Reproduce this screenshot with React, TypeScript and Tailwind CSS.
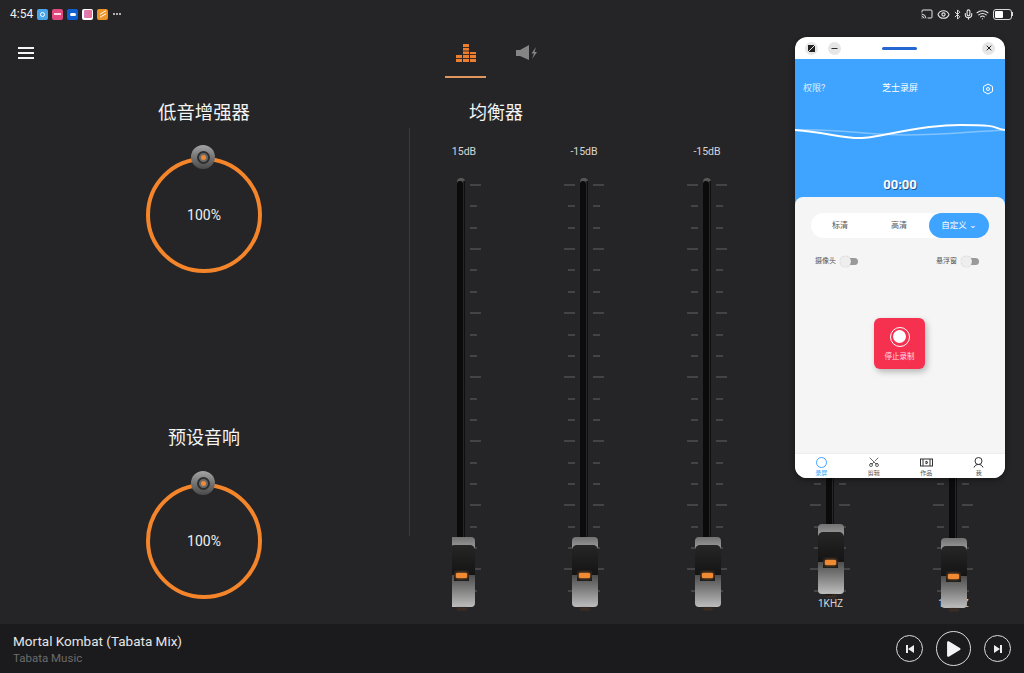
import { Bluetooth, Cast, Eye, Mic, Minus, Scissors, Wifi, X } from "lucide-react";

const cjk = "font-['Roboto','Noto_Sans_CJK_SC',sans-serif]";

function range(n: number): number[] {
  return Array.from({ length: n }, (_, i) => i);
}

function Ticks({ side }: { side: "left" | "right" }) {
  return (
    <div className={`flex w-[11px] flex-col justify-between pt-[6px] h-[414px] ${side === "left" ? "items-end" : "items-start"}`}>
      {range(20).map((i) => (
        <div key={i} className={`h-[2px] bg-[#444446] ${i % 3 === 0 ? "w-[11px]" : "w-[7px]"}`} />
      ))}
    </div>
  );
}

function Thumb({ top }: { top: string }) {
  return (
    <div className={`absolute left-[49px] ${top} h-[73px] w-[26px]`}>
      <div className="h-[12px] rounded-t-[4px] bg-gradient-to-b from-[#727272] to-[#a0a0a0]" />
      <div className="-mt-[4px] h-[30px] rounded-t-[5px] bg-gradient-to-b from-[#262626] to-[#141414]" />
      <div className="h-[32px] rounded-b-[4px] bg-gradient-to-b from-[#4e4e4e] to-[#bebebe]" />
      <div className="absolute left-[5px] top-[33px] flex h-[11px] w-[15px] items-center justify-center bg-[#1b1b1b]">
        <div className="h-[5px] w-[11px] rounded-[1px] bg-[#f08a33] shadow-[0_0_3px_#f08a33]" />
      </div>
      <div className="mx-auto mt-[1px] h-[2px] w-[10px] bg-[#4a3423] blur-[1px]" />
    </div>
  );
}

function EqColumn({ db, label, top, dbClass }: { db?: string; label?: string; top: string; dbClass?: string }) {
  return (
    <div className="relative w-[123px] shrink-0">
      <div className={`h-[14px] pr-px text-center text-[10.5px] leading-[14px] text-[#d6d6d6] ${dbClass ?? ""}`}>{db}</div>
      <div className="mt-[19px] flex h-[418px] pl-[41px]">
        <Ticks side="left" />
        <div className="ml-[5px] flex h-[418px] w-[8px] rounded-t-full bg-gradient-to-b from-[#5c5c5c] to-[#333335] to-[3%] pt-[3px]">
          <div className="h-full w-[6px] rounded-t-full bg-[#0b0b0b]" />
          <div className="h-full w-[1px] bg-[#262628]" />
          <div className="h-full w-[1px] bg-[#0f0f0f]" />
        </div>
        <div className="ml-[5px]">
          <Ticks side="right" />
        </div>
      </div>
      <div className="mt-[1px] h-[14px] text-center text-[10px] leading-[14px] text-[#d6d6d6]">{label}</div>
      <Thumb top={top} />
    </div>
  );
}

function Knob() {
  return (
    <div className="relative flex h-[116px] w-[116px] items-center justify-center rounded-full border-[4px] border-[#f5852b]">
      <span className="text-[14px] text-[#efefef]">100%</span>
      <div className="absolute -top-[16px] left-[41px] flex h-[24px] w-[24px] items-center justify-center rounded-full bg-gradient-to-b from-[#a4a4a4] to-[#4a4a4a]">
        <div className="flex h-[13px] w-[13px] items-center justify-center rounded-full border-[2px] border-[#2e2e2e] bg-[#6a6a6a]">
          <div className="h-[5px] w-[5px] rounded-full bg-[#f08a33]" />
        </div>
      </div>
    </div>
  );
}

function AppDot({ className, children }: { className: string; children?: React.ReactNode }) {
  return <div className={`flex h-[11px] w-[11px] items-center justify-center rounded-[2px] ${className}`}>{children}</div>;
}

function StatusBar() {
  return (
    <div className="flex h-[28px] items-center pl-[10px] pr-[11px]">
      <span className="w-[27px] text-[12px] text-[#f0f0f0]">4:54</span>
      <div className="flex items-center gap-[4px]">
        <AppDot className="bg-[#48a5ea]">
          <div className="h-[5px] w-[5px] rounded-full border border-white" />
        </AppDot>
        <AppDot className="bg-[#e0487f]">
          <div className="h-[2px] w-[7px] bg-white/80" />
        </AppDot>
        <AppDot className="bg-[#0f5fd0]">
          <div className="h-[3px] w-[6px] rounded-full bg-white" />
        </AppDot>
        <AppDot className="bg-white">
          <div className="h-[8px] w-[8px] rounded-[1px] bg-gradient-to-r from-[#d77fc0] to-[#f06c8c]" />
        </AppDot>
        <AppDot className="bg-[#ee9325]">
          <div className="h-[4px] w-[6px] -skew-y-[30deg] border-y border-white" />
        </AppDot>
        <div className="ml-[1px] flex gap-[1px]">
          {range(3).map((i) => (
            <div key={i} className="h-[2px] w-[2px] rounded-full bg-[#dcdcdc]" />
          ))}
        </div>
      </div>
      <div className="ml-auto flex items-center text-[#e8e8e8]">
        <Cast size={12} strokeWidth={2} />
        <Eye size={13} strokeWidth={2} className="ml-[4px]" />
        <Bluetooth size={11} strokeWidth={2} className="ml-[2px]" />
        <Mic size={11} strokeWidth={2.4} className="ml-[0px]" />
        <Wifi size={13} strokeWidth={2} className="ml-[2px]" />
        <div className="ml-[4px] flex items-center">
          <div className="flex h-[11px] w-[19px] items-center rounded-[3px] border border-[#d8d8d8] p-px">
            <div className="h-full w-[8px] rounded-[1px] bg-white" />
          </div>
          <div className="h-[4px] w-[1px] bg-[#d8d8d8]" />
        </div>
      </div>
    </div>
  );
}

function Header() {
  return (
    <div className="flex h-[51px] shrink-0">
      <div className="ml-[18px] mt-[19px] flex h-[12px] w-[16px] flex-col justify-between">
        {range(3).map((i) => (
          <div key={i} className="h-[2px] bg-[#f4f4f4]" />
        ))}
      </div>
      <div className="ml-[411px] flex h-[50px] w-[41px] items-start justify-center border-b-2 border-[#e0965c] pt-[16px]">
        <svg width="20" height="18" viewBox="0 0 20 18">
          <path d="M0 11h6v7H0zM7 0h6v18H7zM14 8h6v10h-6z" fill="#ec7f2f" />
          <path d="M0 14.5h20M7 3.5h6M7 7h6M7 10.5h13" stroke="#3a2a20" strokeWidth="1" />
        </svg>
      </div>
      <div className="ml-[30px] mt-[16px]">
        <svg width="21" height="18" viewBox="0 0 21 18">
          <path d="M0 6h4L13 1v15L4 12H0z" fill="#858585" />
          <path d="M20 3l-4.5 6.5H18L16 15l5-7h-2.5z" fill="#858585" />
        </svg>
      </div>
    </div>
  );
}

function Toggle() {
  return (
    <div className="relative ml-[5px] h-[7px] w-[17px] rounded-full bg-[#9a9a9a]">
      <div className="absolute -left-[1px] -top-[2px] h-[11px] w-[11px] rounded-full bg-[#eeeeee] shadow-[0_0_1px_rgba(0,0,0,0.3)]" />
    </div>
  );
}

function RecorderWindow() {
  return (
    <div className={`absolute left-[795px] top-[37px] flex h-[441px] w-[210px] flex-col overflow-hidden rounded-[12px] bg-white shadow-[0_2px_6px_rgba(0,0,0,0.4)] ${cjk}`}>
      <div className="flex h-[22px] shrink-0 items-center px-[10px]">
        <div className="flex h-[13px] w-[13px] items-center justify-center rounded-full bg-[#e6e6e6]">
          <svg width="7" height="7" viewBox="0 0 7 7">
            <path d="M0 0h7v7H0z" fill="#222" />
            <path d="M0 7l7-7" stroke="#e6e6e6" strokeWidth="1" />
          </svg>
        </div>
        <div className="ml-[10px] flex h-[13px] w-[13px] items-center justify-center rounded-full bg-[#e6e6e6]">
          <Minus size={9} strokeWidth={2.5} className="text-[#222]" />
        </div>
        <div className="ml-[41px] h-[3px] w-[35px] rounded-full bg-[#2467d3]" />
        <div className="ml-auto flex h-[13px] w-[13px] items-center justify-center rounded-full bg-[#e6e6e6]">
          <X size={8} strokeWidth={3} className="text-[#222]" />
        </div>
      </div>

      <div className="flex h-[148px] shrink-0 flex-col bg-[#3fa4ff]">
        <div className="grid h-[58px] grid-cols-[1fr_auto_1fr] items-center px-[8px] pt-[2px] text-[9px] text-white">
          <span className="text-[#dceeff]">权限?</span>
          <span>芝士录屏</span>
          <svg width="12" height="12" viewBox="0 0 12 12" fill="none" stroke="white" strokeWidth="1" className="mr-[3px] justify-self-end">
            <path d="M6 1l4.5 2.5v5L6 11 1.5 8.5v-5z" />
            <circle cx="6" cy="6" r="1.5" />
          </svg>
        </div>
        <svg width="210" height="30" viewBox="0 0 210 30" fill="none" className="mt-[3px]">
          <path d="M0 10C40 8 70 15 110 15S170 12 210 10" stroke="white" strokeOpacity="0.35" strokeWidth="1.5" />
          <path d="M0 10C30 12 45 18 65 18S120 5 165 5 195 8 210 10" stroke="white" strokeWidth="2" />
        </svg>
        <div className="mt-[26px] text-center text-[13px] font-bold leading-[18px] text-white [text-shadow:1px_1px_0_rgba(0,0,0,0.5)]">00:00</div>
      </div>

      <div className="-mt-[10px] flex flex-1 flex-col rounded-t-[8px] bg-[#f5f5f5] px-[16px] pt-[16px]">
        <div className="flex h-[25px] items-center rounded-full bg-white text-[8px] text-[#555]">
          <span className="w-[58px] text-center">标清</span>
          <span className="w-[60px] text-center">高清</span>
          <span className="flex h-full flex-1 items-center justify-center rounded-full bg-[#3fa4ff] text-[8.5px] text-white">自定义 ⌄</span>
        </div>
        <div className="mt-[18px] flex items-center pl-[4px] pr-[10px] text-[7px] text-[#555]">
          <span className="w-[21px]">摄像头</span>
          <Toggle />
          <span className="ml-auto w-[21px]">悬浮窗</span>
          <Toggle />
        </div>
        <div className="ml-[63px] mt-[51px] flex h-[51px] w-[51px] flex-col items-center rounded-[6px] bg-[#f6304f] pt-[9px] shadow-[2px_3px_6px_rgba(0,0,0,0.25)]">
          <div className="flex h-[20px] w-[20px] items-center justify-center rounded-full border-[1.5px] border-white">
            <div className="h-[13px] w-[13px] rounded-full bg-white" />
          </div>
          <span className="mt-[4px] text-[7.5px] text-[#ffdfe4]">停止录制</span>
        </div>
      </div>

      <div className="flex h-[25px] shrink-0 items-center justify-around border-t border-[#eeeeee] bg-white pt-[1px] text-[6px] text-[#555]">
        <div className="flex w-[30px] flex-col items-center text-[#3fa4ff]">
          <div className="h-[11px] w-[11px] rounded-full border border-[#3fa4ff]" />
          <span>录屏</span>
        </div>
        <div className="flex w-[30px] flex-col items-center">
          <Scissors size={12} strokeWidth={1.5} className="-rotate-90 text-[#333]" />
          <span>剪辑</span>
        </div>
        <div className="flex w-[30px] flex-col items-center">
          <svg width="13" height="11" viewBox="0 0 13 11" fill="none" stroke="#333" strokeWidth="1">
            <rect x="0.5" y="2" width="12" height="7" />
            <path d="M3 2v7M10 2v7M6 4v3l2-1.5z" />
          </svg>
          <span>作品</span>
        </div>
        <div className="flex w-[30px] flex-col items-center">
          <svg width="11" height="11" viewBox="0 0 11 11" fill="none" stroke="#333" strokeWidth="1">
            <circle cx="5.5" cy="4" r="3.5" />
            <path d="M1 10.5c1-2.5 2.5-3 4.5-3s3.5.5 4.5 3" />
          </svg>
          <span>我</span>
        </div>
      </div>
    </div>
  );
}

function PlayerBar() {
  return (
    <div className="flex h-[49px] shrink-0 items-center bg-[#1b1b1d] pl-[13px] pr-[13px]">
      <div className="flex flex-col">
        <span className="text-[13.5px] leading-[18px] text-[#e6e6e6]">Mortal Kombat (Tabata Mix)</span>
        <span className="text-[11.5px] leading-[16px] text-[#6c6c6c]">Tabata Music</span>
      </div>
      <div className="ml-auto flex items-center gap-[13px]">
        <div className="flex h-[27px] w-[27px] items-center justify-center rounded-full border border-[#dddddd]">
          <svg width="8" height="8" viewBox="0 0 8 8" fill="#ededed">
            <path d="M0 0h2v8H0zM8 0v8L2 4z" />
          </svg>
        </div>
        <div className="flex h-[35px] w-[35px] items-center justify-center rounded-full border border-[#dddddd]">
          <svg width="14" height="16" viewBox="0 0 13 15" fill="#f4f4f4" className="ml-[1px]">
            <path d="M0 1.5C0 .5 1 0 2 .5l10 6c.8.5.8 1.5 0 2l-10 6c-1 .5-2 0-2-1z" />
          </svg>
        </div>
        <div className="flex h-[27px] w-[27px] items-center justify-center rounded-full border border-[#dddddd]">
          <svg width="8" height="8" viewBox="0 0 8 8" fill="#ededed">
            <path d="M8 0H6v8h2zM0 0v8l6-4z" />
          </svg>
        </div>
      </div>
    </div>
  );
}

export default function App() {
  return (
    <div className={`relative flex h-[673px] w-[1024px] flex-col overflow-hidden bg-[#252527] ${cjk}`}>
      <StatusBar />
      <Header />
      <div className="flex flex-1">
        <div className="flex w-[408px] shrink-0 flex-col items-center pt-[21px]">
          <h2 className="h-[26px] text-[18.4px] leading-[26px] text-[#f4f4f4]">低音增强器</h2>
          <div className="mt-[31px]">
            <Knob />
          </div>
          <h2 className="mt-[152px] h-[26px] text-[18px] leading-[26px] text-[#f4f4f4]">预设音响</h2>
          <div className="mt-[32px]">
            <Knob />
          </div>
        </div>
        <div className="ml-px mt-[49px] h-[408px] w-px bg-[#3a3a3c]" />
        <div className="ml-[42px] flex-1 overflow-hidden pt-[21px]">
          <h2 className="ml-[17px] h-[26px] text-[18px] leading-[26px] text-[#f4f4f4]">均衡器</h2>
          <div className="-ml-[52px] mt-[19px] flex">
            <EqColumn db="15dB" top="top-[392px]" dbClass="pl-[6px]" />
            <EqColumn db="-15dB" top="top-[392px]" />
            <EqColumn db="-15dB" top="top-[392px]" />
            <EqColumn db="-15dB" label="1KHZ" top="top-[379px]" />
            <EqColumn db="-15dB" label="16KHZ" top="top-[393px]" />
          </div>
        </div>
      </div>
      <PlayerBar />
      <RecorderWindow />
    </div>
  );
}
